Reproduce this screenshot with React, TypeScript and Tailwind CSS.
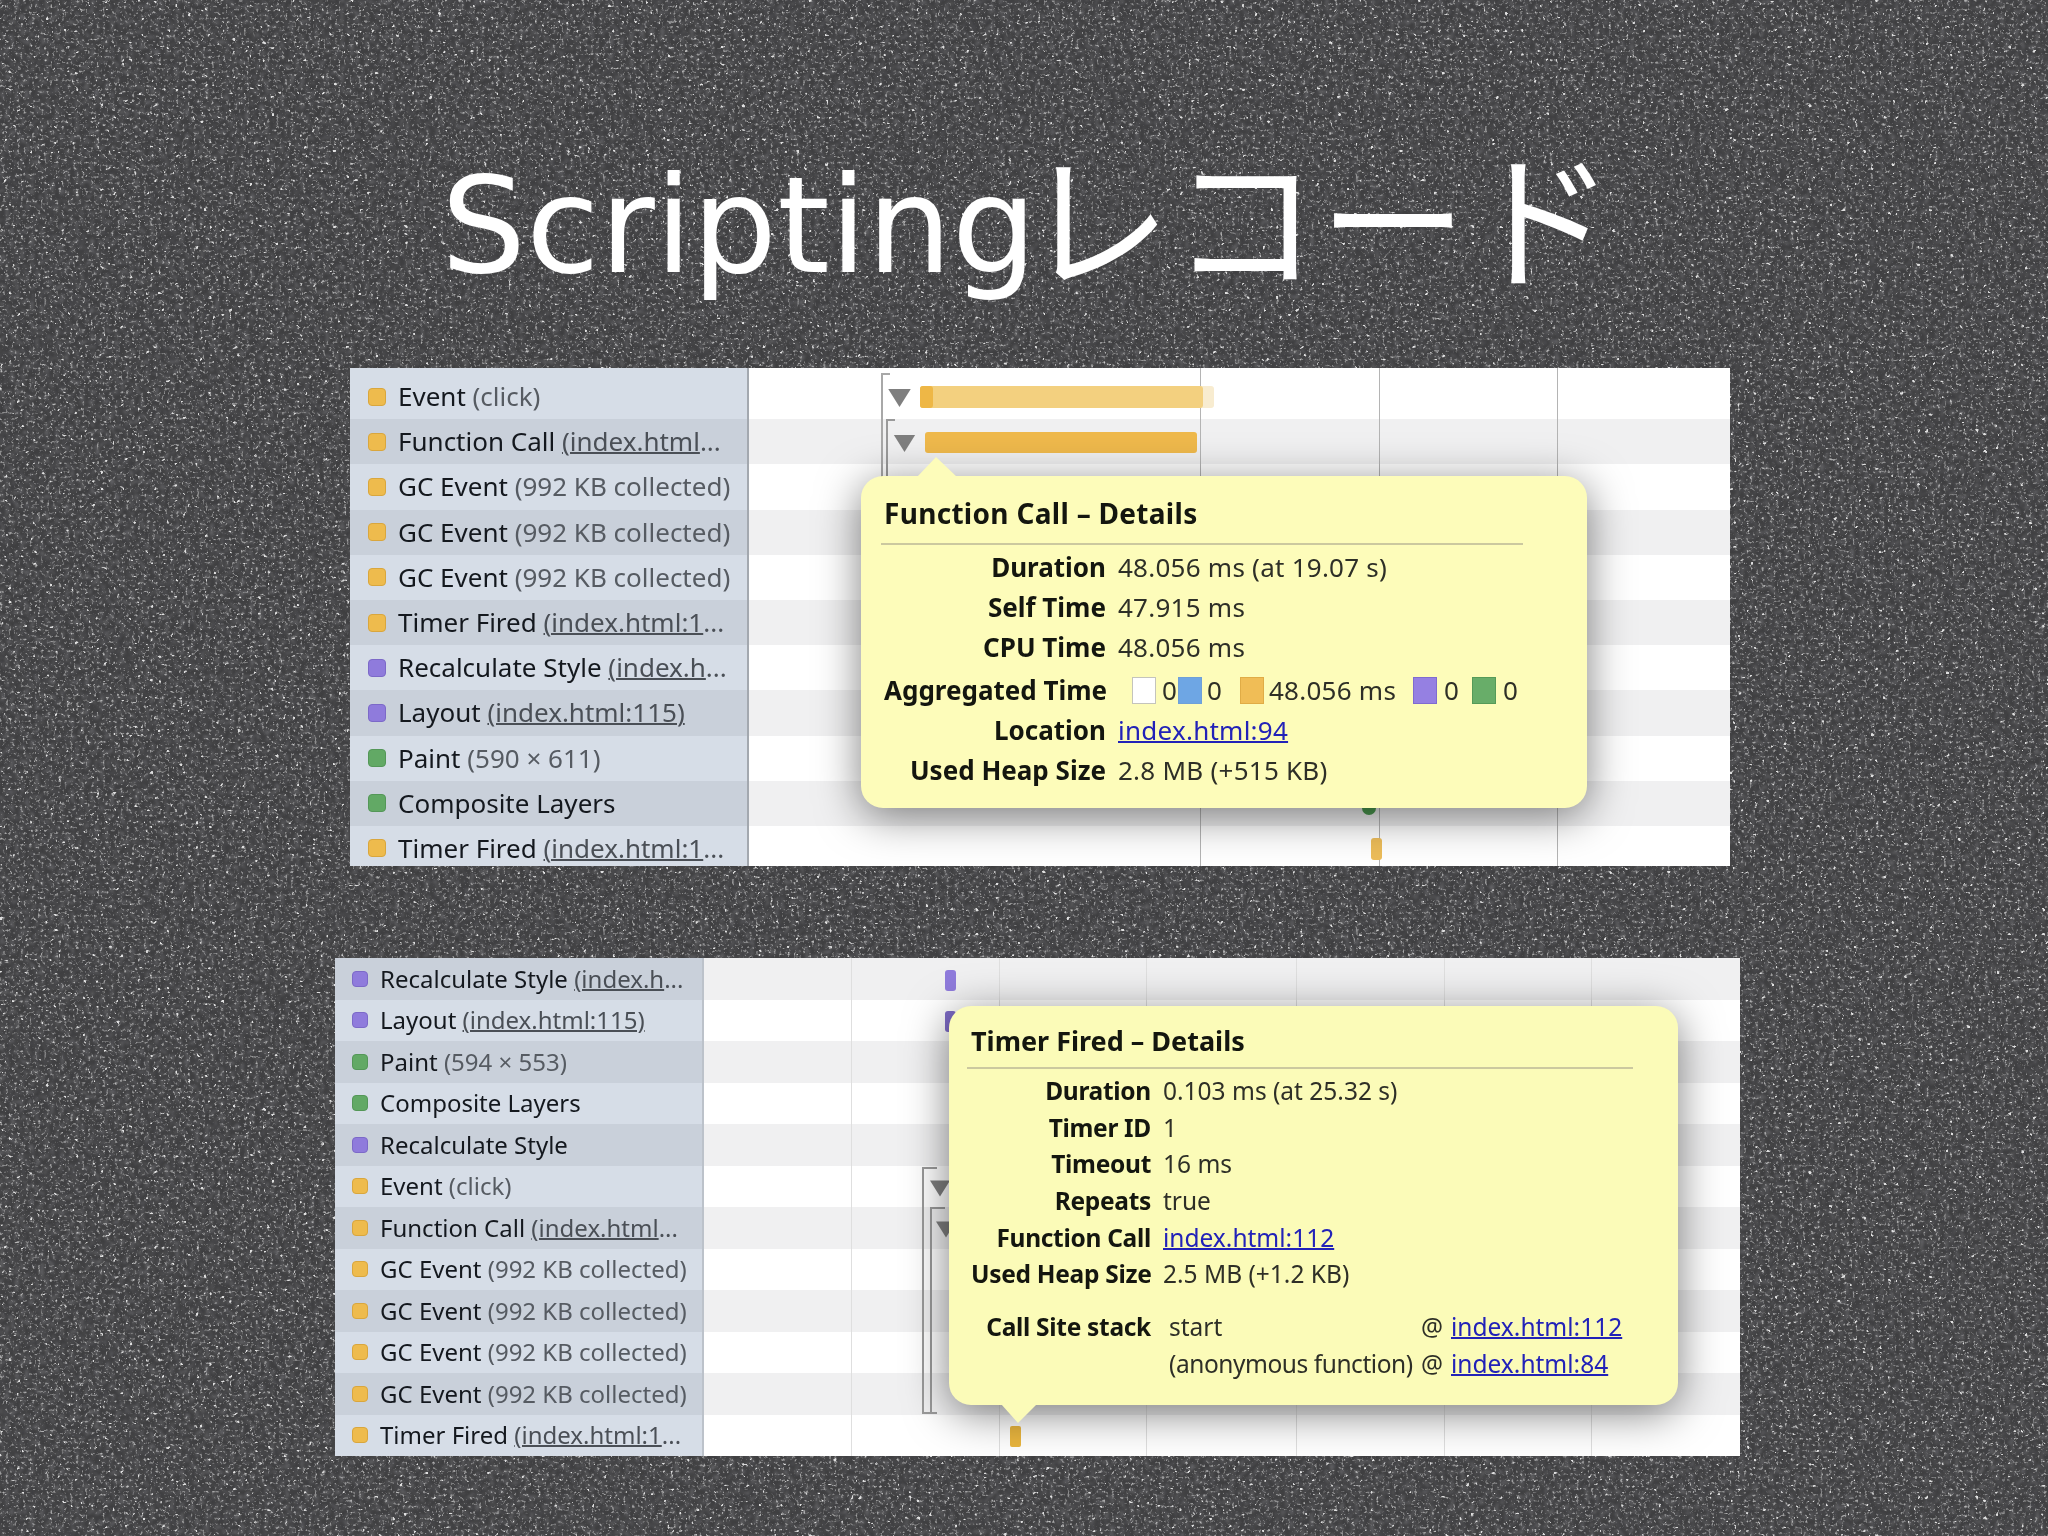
import React from "react";

const ORANGE = "bg-[#eebb4d] border-[#d9a63d]";
const PURPLE = "bg-[#8f7bdc] border-[#7c69c8]";
const GREEN = "bg-[#62a965] border-[#549758]";

type Row = { color: string; name: string; detail?: string; link?: string; more?: boolean };

const topRows: Row[] = [
  { color: ORANGE, name: "Event", detail: "(click)" },
  { color: ORANGE, name: "Function Call", link: "(index.html", more: true },
  { color: ORANGE, name: "GC Event", detail: "(992 KB collected)" },
  { color: ORANGE, name: "GC Event", detail: "(992 KB collected)" },
  { color: ORANGE, name: "GC Event", detail: "(992 KB collected)" },
  { color: ORANGE, name: "Timer Fired", link: "(index.html:1", more: true },
  { color: PURPLE, name: "Recalculate Style", link: "(index.h", more: true },
  { color: PURPLE, name: "Layout", link: "(index.html:115)" },
  { color: GREEN, name: "Paint", detail: "(590 × 611)" },
  { color: GREEN, name: "Composite Layers" },
  { color: ORANGE, name: "Timer Fired", link: "(index.html:1", more: true },
];

const bottomRows: Row[] = [
  { color: PURPLE, name: "Recalculate Style", link: "(index.h", more: true },
  { color: PURPLE, name: "Layout", link: "(index.html:115)" },
  { color: GREEN, name: "Paint", detail: "(594 × 553)" },
  { color: GREEN, name: "Composite Layers" },
  { color: PURPLE, name: "Recalculate Style" },
  { color: ORANGE, name: "Event", detail: "(click)" },
  { color: ORANGE, name: "Function Call", link: "(index.html", more: true },
  { color: ORANGE, name: "GC Event", detail: "(992 KB collected)" },
  { color: ORANGE, name: "GC Event", detail: "(992 KB collected)" },
  { color: ORANGE, name: "GC Event", detail: "(992 KB collected)" },
  { color: ORANGE, name: "GC Event", detail: "(992 KB collected)" },
  { color: ORANGE, name: "Timer Fired", link: "(index.html:1", more: true },
];

function RecordLabel({ row }: { row: Row }) {
  return (
    <>
      <span className={"shrink-0 rounded-[4px] border " + row.color} />
      <span className="whitespace-nowrap text-[#14181e]">
        {row.name}
        {row.detail && <span className="text-[#565b62]"> {row.detail}</span>}
        {row.link && (
          <span className="text-[#4a4f56]">
            {" "}
            <span className="underline decoration-2">{row.link}</span>
            {row.more && "..."}
          </span>
        )}
      </span>
    </>
  );
}

function Triangle({ className }: { className: string }) {
  return (
    <svg className={"absolute " + className} viewBox="0 0 20 16">
      <polygon points="0,0 20,0 10,16" fill="#7f7f7f" />
    </svg>
  );
}

function Link({ children }: { children: React.ReactNode }) {
  return <span className="text-[#2222b8] underline decoration-2">{children}</span>;
}

function DetailRow({ label, children, className }: { label: string; children: React.ReactNode; className?: string }) {
  return (
    <div className={"flex items-center " + (className || "")}>
      <span className="shrink-0 whitespace-nowrap text-right font-bold text-[#14160f] [letter-spacing:var(--lab)] [width:var(--label)]">{label}</span>
      <span className="ml-3 whitespace-nowrap text-[#2e2f27] [letter-spacing:var(--val)]">{children}</span>
    </div>
  );
}

function Swatch({ className }: { className: string }) {
  return <span className={"h-[27px] w-[24px] border " + className} />;
}

function TopPopover() {
  return (
    <div className="absolute left-[112px] top-[108px] h-[332px] w-[726px] rounded-[22px] bg-[#fdfcba] pl-[23px] pt-[21px] text-[26px] shadow-[0_8px_44px_rgba(0,0,0,0.5)] [--lab:0px] [--label:222px] [--val:0.25px]">
      <svg className="absolute -top-[19px] left-[56px] h-[20px] w-[40px]" viewBox="0 0 40 20">
        <polygon points="0,20 19,0 40,20" fill="#fdfcba" />
      </svg>
      <h3 className="text-[28px] font-bold leading-[32px] tracking-[0.3px] text-[#14160f]">Function Call – Details</h3>
      <div className="-ml-[3px] mt-[14px] h-[2px] w-[642px] bg-[#cbc89f]" />
      <div className="mt-[6px] flex flex-col gap-[7px] leading-[33px]">
        <DetailRow label="Duration">48.056 ms (at 19.07 s)</DetailRow>
        <DetailRow label="Self Time">47.915 ms</DetailRow>
        <DetailRow label="CPU Time">48.056 ms</DetailRow>
        <DetailRow label="Aggregated Time" className="mt-[3px]">
          <span className="ml-[14px] flex items-center">
            <Swatch className="border-[#c4c4bc] bg-white" />
            <span className="ml-[6px] w-[16px]">0</span>
            <Swatch className="border-[#6fa0d8] bg-[#6ea6e4]" />
            <span className="ml-[5px] w-[33px]">0</span>
            <Swatch className="border-[#e0ac46] bg-[#f0bd56]" />
            <span className="ml-[5px] w-[144px]">48.056 ms</span>
            <Swatch className="border-[#7f6bd0] bg-[#9580e2]" />
            <span className="ml-[7px] w-[28px]">0</span>
            <Swatch className="border-[#559a58] bg-[#68ad69]" />
            <span className="ml-[7px]">0</span>
          </span>
        </DetailRow>
        <DetailRow label="Location">
          <Link>index.html:94</Link>
        </DetailRow>
        <DetailRow label="Used Heap Size">2.8 MB (+515 KB)</DetailRow>
      </div>
    </div>
  );
}

function BottomPopover() {
  return (
    <div className="absolute left-[245px] top-[48px] h-[399px] w-[729px] rounded-[22px] bg-[#fbfbb8] pl-[22px] pt-[19px] text-[24.5px] shadow-[0_8px_44px_rgba(0,0,0,0.5)] [--lab:-0.3px] [--label:180px] [--val:0px]">
      <svg className="absolute -bottom-[18px] left-[52px] h-[19px] w-[36px]" viewBox="0 0 36 19">
        <polygon points="0,0 36,0 17,19" fill="#fbfbb8" />
      </svg>
      <h3 className="text-[27px] font-bold leading-[32px] text-[#14160f]">Timer Fired – Details</h3>
      <div className="-ml-[4px] mt-[10px] h-[2px] w-[666px] bg-[#cbc89f]" />
      <div className="mt-[6px] flex flex-col gap-[4.7px] leading-[32px]">
        <DetailRow label="Duration">0.103 ms (at 25.32 s)</DetailRow>
        <DetailRow label="Timer ID">1</DetailRow>
        <DetailRow label="Timeout">16 ms</DetailRow>
        <DetailRow label="Repeats">true</DetailRow>
        <DetailRow label="Function Call">
          <Link>index.html:112</Link>
        </DetailRow>
        <DetailRow label="Used Heap Size">2.5 MB (+1.2 KB)</DetailRow>
      </div>
      <div className="mt-[21px] flex flex-col gap-[4.7px] leading-[32px]">
        <DetailRow label="Call Site stack">
          <span className="ml-[6px] inline-flex">
            <span className="w-[252px]">start</span>
            <span className="w-[30px]">@</span>
            <Link>index.html:112</Link>
          </span>
        </DetailRow>
        <DetailRow label="">
          <span className="ml-[6px] inline-flex">
            <span className="w-[252px] whitespace-nowrap tracking-[-0.45px]">(anonymous function)</span>
            <span className="w-[30px]">@</span>
            <Link>index.html:84</Link>
          </span>
        </DetailRow>
      </div>
    </div>
  );
}

function TopTimeline() {
  return (
    <div className="relative flex-1 overflow-hidden bg-white pt-[6px]">
      {topRows.map((_, i) => (
        <div key={i} className={"h-[45.2px] " + (i % 2 ? "bg-[#f0f0f1]" : "bg-white")} />
      ))}
      <div className="absolute inset-y-0 left-[451px] w-[1px] bg-[#b4b4b4]" />
      <div className="absolute inset-y-0 left-[630px] w-[1px] bg-[#b4b4b4]" />
      <div className="absolute inset-y-0 left-[808px] w-[1px] bg-[#b4b4b4]" />

      <div className="absolute left-[132px] top-[5px] h-[120px] w-[9px] border-l-2 border-t-2 border-[#a8a8a8]" />
      <div className="absolute left-[137px] top-[51px] h-[70px] w-[9px] border-l-2 border-t-2 border-[#9a9a9a]" />
      <Triangle className="left-[139px] top-[21px] h-[18px] w-[23px]" />
      <Triangle className="left-[144px] top-[67px] h-[17px] w-[23px]" />

      <div className="absolute left-[171px] top-[18px] h-[22px] w-[294px] rounded-[3px] bg-[#f8ecd0]" />
      <div className="absolute left-[171px] top-[18px] h-[22px] w-[283px] rounded-[3px] bg-[#f3d07f]" />
      <div className="absolute left-[171px] top-[18px] h-[22px] w-[13px] rounded-[3px] bg-[#eeb746]" />
      <div className="absolute left-[176px] top-[64px] h-[21px] w-[272px] rounded-[3px] bg-[#efb94c]" />

      <div className="absolute left-[613px] top-[438px] h-[9px] w-[14px] rounded-b-full bg-[#4c9a50]" />
      <div className="absolute left-[622px] top-[470px] h-[22px] w-[11px] rounded-[3px] bg-[#edbd5a]" />

      <TopPopover />
    </div>
  );
}

function BottomTimeline() {
  return (
    <div className="relative flex-1 overflow-hidden">
      {bottomRows.map((_, i) => (
        <div key={i} className={"h-[41.5px] " + (i % 2 ? "bg-white" : "bg-[#f0f0f1]")} />
      ))}
      <div className="absolute inset-y-0 left-[147px] w-[1px] bg-[#dfdfdf]" />
      <div className="absolute inset-y-0 left-[295px] w-[1px] bg-[#dfdfdf]" />
      <div className="absolute inset-y-0 left-[442px] w-[1px] bg-[#dfdfdf]" />
      <div className="absolute inset-y-0 left-[592px] w-[1px] bg-[#dfdfdf]" />
      <div className="absolute inset-y-0 left-[740px] w-[1px] bg-[#dfdfdf]" />
      <div className="absolute inset-y-0 left-[887px] w-[1px] bg-[#dfdfdf]" />

      <div className="absolute left-[218px] top-[209px] h-[247px] w-[15px] border-y-2 border-l-2 border-[#9a9a9a]" />
      <div className="absolute left-[226px] top-[249px] h-[205px] w-[15px] border-l-2 border-t-2 border-[#9a9a9a]" />
      <Triangle className="left-[226px] top-[222px] h-[17px] w-[20px]" />
      <Triangle className="left-[232px] top-[263px] h-[17px] w-[20px]" />

      <div className="absolute left-[241px] top-[12px] h-[21px] w-[11px] rounded-[3px] bg-[#8f7bdc]" />
      <div className="absolute left-[241px] top-[53px] h-[21px] w-[11px] rounded-[3px] bg-[#7f6cc8]" />
      <div className="absolute left-[306px] top-[468px] h-[21px] w-[11px] rounded-[2px] bg-[#eab63f]" />

      <BottomPopover />
    </div>
  );
}

export default function App() {
  return (
    <div className="relative min-h-[1536px] overflow-hidden bg-[#3f3f41] font-['Noto_Sans','Noto_Sans_CJK_JP',sans-serif]">
      {/* speckled slate backdrop */}
      <svg className="absolute inset-0 h-full w-full" aria-hidden="true">
        <filter id="mottle">
          <feTurbulence type="fractalNoise" baseFrequency="0.2" numOctaves="3" seed="4" />
          <feColorMatrix values="0 0 0 0 0.16  0 0 0 0 0.16  0 0 0 0 0.17  2 0 0 0 -0.9" />
          <feGaussianBlur stdDeviation="0.8" />
        </filter>
        <filter id="grain">
          <feTurbulence type="fractalNoise" baseFrequency="0.34" numOctaves="2" seed="23" />
          <feColorMatrix values="0 0 0 0 0.6  0 0 0 0 0.6  0 0 0 0 0.6  3 0 0 0 -1.75" />
          <feGaussianBlur stdDeviation="0.7" />
        </filter>
        <filter id="specks">
          <feTurbulence type="fractalNoise" baseFrequency="0.24" numOctaves="2" seed="11" />
          <feColorMatrix values="0 0 0 0 0.75  0 0 0 0 0.75  0 0 0 0 0.75  10 0 0 0 -7.1" />
          <feGaussianBlur stdDeviation="0.6" />
        </filter>
        <rect width="100%" height="100%" filter="url(#mottle)" />
        <rect width="100%" height="100%" filter="url(#grain)" />
        <rect width="100%" height="100%" filter="url(#specks)" />
      </svg>

      <div className="relative">
        <h1 className="flex h-[368px] items-center justify-center whitespace-nowrap pl-[8px] pt-[84px] font-['DejaVu_Sans','Noto_Sans_CJK_JP',sans-serif] text-[134px] font-normal leading-none text-white">
          Scripting<span className="-ml-[14px] text-[148px] font-normal">レコード</span>
        </h1>

        <section className="ml-[350px] flex h-[498px] w-[1380px] overflow-hidden text-[26px] blur-[0.7px]">
          <div className="w-[399px] shrink-0 border-r-2 border-[#a3a8af] bg-[#d6dde7] pt-[6px]">
            {topRows.map((row, i) => (
              <div
                key={i}
                className={
                  "flex h-[45.2px] items-center gap-[12px] pl-[18px] [&>span:first-child]:h-[18px] [&>span:first-child]:w-[18px] " +
                  (i % 2 ? "bg-[#c9d0da]" : "bg-[#d6dde7]")
                }
              >
                <RecordLabel row={row} />
              </div>
            ))}
          </div>
          <TopTimeline />
        </section>

        <section className="ml-[335px] mt-[92px] flex h-[498px] w-[1405px] overflow-hidden text-[24px] blur-[0.7px]">
          <div className="w-[369px] shrink-0 border-r-2 border-[#bcc2ca]">
            {bottomRows.map((row, i) => (
              <div
                key={i}
                className={
                  "flex h-[41.5px] items-center gap-[12px] pl-[17px] [&>span:first-child]:h-[16px] [&>span:first-child]:w-[16px] " +
                  (i % 2 ? "bg-[#d6dde7]" : "bg-[#c9d0da]")
                }
              >
                <RecordLabel row={row} />
              </div>
            ))}
          </div>
          <BottomTimeline />
        </section>
      </div>
    </div>
  );
}
